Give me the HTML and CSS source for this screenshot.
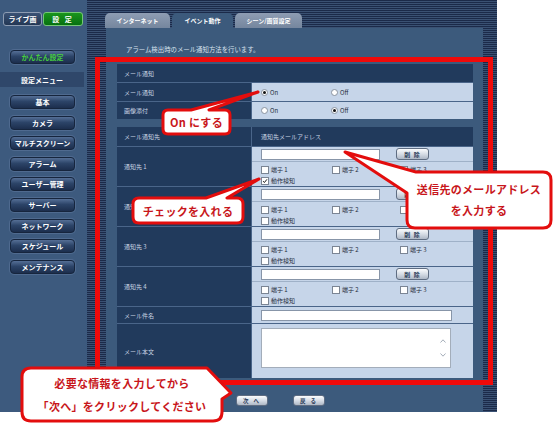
FILE: index.html
```html
<!DOCTYPE html>
<html lang="ja">
<head>
    <meta charset="UTF-8">
    <meta name="viewport" content="width=device-width, initial-scale=1.0">
    <title>イベント動作 - メール通知</title>
    <link rel="stylesheet" href="styles.css">
</head>

<body>
    <div class="screen">
        <aside class="side">
            <div class="mode">
                <span class="mode-btn live">ライブ画</span>
                <span class="mode-btn setup">設 定</span>
            </div>
            <div class="easy">かんたん設定</div>
            <div class="menu-title">設定メニュー</div>
            <nav class="menu">
                <a href="#">基本</a>
                <a href="#">カメラ</a>
                <a href="#">マルチスクリーン</a>
                <a href="#">アラーム</a>
                <a href="#">ユーザー管理</a>
                <a href="#">サーバー</a>
                <a href="#">ネットワーク</a>
                <a href="#">スケジュール</a>
                <a href="#">メンテナンス</a>
            </nav>
        </aside>

        <div class="work">
            <div class="tabs">
                <span class="tab tab-net">インターネット</span>
                <span class="tab tab-event active">イベント動作</span>
                <span class="tab tab-scene">シーン/画質設定</span>
            </div>
            <main class="panel">
                <p class="lead">アラーム検出時のメール通知方法を行います。</p>

                <div class="grid">
                    <div class="head">メール通知</div>
                    <div class="lbl">メール通知</div>
                    <div class="val opts">
                        <span class="opt"><i class="radio on"></i>On</span>
                        <span class="opt"><i class="radio"></i>Off</span>
                    </div>
                    <div class="lbl">画像添付</div>
                    <div class="val opts">
                        <span class="opt"><i class="radio"></i>On</span>
                        <span class="opt"><i class="radio on"></i>Off</span>
                    </div>
                </div>

                <div class="grid grid-dest">
                    <div class="lbl hd">メール通知先</div>
                    <div class="lbl hd addr-hd">通知先メールアドレス</div>

                    <div class="lbl">通知先 1</div>
                    <div class="val dest">
                        <div class="addr"><span class="field"></span><span class="btn del">削 除</span></div>
                        <div class="checks">
                            <span class="opt"><i class="box"></i>端子 1</span>
                            <span class="opt"><i class="box"></i>端子 2</span>
                            <span class="opt"><i class="box"></i>端子 3</span>
                            <span class="opt"><i class="box checked"><svg viewBox="0 0 8 8"><path d="M1.5 4.2 3.2 6 6.6 1.8" /></svg></i>動作検知</span>
                        </div>
                    </div>

                    <div class="lbl">通知先 2</div>
                    <div class="val dest">
                        <div class="addr"><span class="field"></span><span class="btn del">削 除</span></div>
                        <div class="checks">
                            <span class="opt"><i class="box"></i>端子 1</span>
                            <span class="opt"><i class="box"></i>端子 2</span>
                            <span class="opt"><i class="box"></i>端子 3</span>
                            <span class="opt"><i class="box"></i>動作検知</span>
                        </div>
                    </div>

                    <div class="lbl">通知先 3</div>
                    <div class="val dest">
                        <div class="addr"><span class="field"></span><span class="btn del">削 除</span></div>
                        <div class="checks">
                            <span class="opt"><i class="box"></i>端子 1</span>
                            <span class="opt"><i class="box"></i>端子 2</span>
                            <span class="opt"><i class="box"></i>端子 3</span>
                            <span class="opt"><i class="box"></i>動作検知</span>
                        </div>
                    </div>

                    <div class="lbl">通知先 4</div>
                    <div class="val dest">
                        <div class="addr"><span class="field"></span><span class="btn del">削 除</span></div>
                        <div class="checks">
                            <span class="opt"><i class="box"></i>端子 1</span>
                            <span class="opt"><i class="box"></i>端子 2</span>
                            <span class="opt"><i class="box"></i>端子 3</span>
                            <span class="opt"><i class="box"></i>動作検知</span>
                        </div>
                    </div>

                    <div class="lbl">メール件名</div>
                    <div class="val subj"><span class="field wide"></span></div>

                    <div class="lbl">メール本文</div>
                    <div class="val body-cell">
                        <div class="area">
                            <span class="scroll">
                                <svg viewBox="0 0 6 4"><path d="M0.5 3.5 3 0.8 5.5 3.5" /></svg>
                                <svg viewBox="0 0 6 4"><path d="M0.5 0.5 3 3.2 5.5 0.5" /></svg>
                            </span>
                        </div>
                    </div>
                </div>

                <div class="actions">
                    <span class="btn nav-btn">次 へ</span>
                    <span class="btn nav-btn">戻 る</span>
                </div>
            </main>
        </div>
    </div>

    <!-- 注釈（赤枠と吹き出し） -->
    <svg class="marks" width="555" height="427" viewBox="0 0 555 427">
        <rect x="97.5" y="59.5" width="393" height="323" fill="none" stroke="#f00a0a" stroke-width="5" />
        <path class="bubble" d="M168 110 H191 L258 92 L209 110 H225 Q230 110 230 115 V129 Q230 134 225 134 H168 Q163 134 163 129 V115 Q163 110 168 110 Z" />
        <path class="bubble" d="M139 198 H206 L259 179 L227 198 H237 Q243 198 243 204 V217 Q243 223 237 223 H139 Q133 223 133 217 V204 Q133 198 139 198 Z" />
        <path class="bubble" d="M416 172 H543 Q551 172 551 180 V220 Q551 228 543 228 H415 Q407 228 407 220 V193 L345 152 L416 172 Z" />
        <path class="bubble" d="M31 368 H207 L231 393 L222 399 V412 Q222 421 213 421 H31 Q22 421 22 412 V377 Q22 368 31 368 Z" />
    </svg>
    <div class="note note-on">On にする</div>
    <div class="note note-check">チェックを入れる</div>
    <div class="note note-addr">送信先のメールアドレス<br>を入力する</div>
    <div class="note note-next">必要な情報を入力してから<br>「次へ」をクリックしてください</div>
</body>
</html>
```

FILE: styles.css
```css
body {
    margin: 0;
    padding: 0;
    background-color: #fff;
    font-family: "Noto Sans CJK JP", "Noto Sans", sans-serif;
    width: 555px;
    height: 427px;
    position: relative;
    overflow: hidden;
}

.screen {
    display: flex;
    width: 497px;
    height: 412px;
    background-color: #3d5a7e;
}

/* サイドメニュー */
.side {
    width: 87px;
    padding-top: 12px;
    display: flex;
    flex-direction: column;
}

.mode {
    display: flex;
    gap: 1px;
    padding-left: 3px;
    height: 14px;
}

.mode-btn {
    display: flex;
    align-items: center;
    justify-content: center;
    box-sizing: border-box;
    border-radius: 3px;
    font-size: 7px;
    font-weight: bold;
    color: #fff;
}

.mode-btn.live {
    width: 39px;
    background: linear-gradient(#3a5275, #233754);
    border: 1px solid #8d9cb2;
}

.mode-btn.setup {
    width: 40px;
    background: linear-gradient(#1a961c, #067010);
    border: 1px solid #74c874;
    letter-spacing: 2px;
}

.easy,
.menu a {
    display: flex;
    align-items: center;
    justify-content: center;
    box-sizing: border-box;
    width: 65px;
    height: 14px;
    margin-left: 10px;
    border: 1px solid #16253d;
    border-radius: 4px;
    background: linear-gradient(#556f96, #2c4468 45%, #1c2e4d);
    box-shadow: 0 0 0 1px #4f6a8f;
    font-size: 7px;
    font-weight: bold;
    color: #fff;
    text-decoration: none;
}

.easy {
    margin-top: 24px;
    color: #46d03c;
}

.menu-title {
    margin-top: 8px;
    width: 84px;
    height: 15px;
    background-color: #2f476a;
    color: #fff;
    font-size: 7px;
    font-weight: bold;
    display: flex;
    align-items: center;
    justify-content: center;
}

.menu {
    margin-top: 8px;
    display: flex;
    flex-direction: column;
    gap: 6.6px;
}

/* 右側 */
.work {
    width: 410px;
    box-sizing: border-box;
    padding: 0 14px 0 19px;
    display: flex;
    flex-direction: column;
    background: repeating-linear-gradient(#1b2a49 0, #1b2a49 1px, #3a5173 1px, #3a5173 2px);
}

.tabs {
    height: 28px;
    display: flex;
    align-items: flex-end;
    gap: 2px;
    margin-left: -1px;
}

.tab {
    height: 15px;
    display: flex;
    align-items: center;
    justify-content: center;
    border-radius: 5px 5px 0 0;
    background: linear-gradient(#8e9db3, #75869e);
    color: #fff;
    font-size: 6px;
    font-weight: bold;
}

.tab-net { width: 65px; }
.tab-event { width: 61px; }
.tab-scene { width: 67px; }

.tab.active {
    background: #3c5a7c;
}

.panel {
    flex: 1;
    background-color: #3c5a7c;
    padding: 16px 10px 0 11px;
}

.lead {
    margin: 0 0 8px 0;
    height: 12px;
    line-height: 12px;
    padding-left: 9px;
    font-size: 6.4px;
    color: #d8e2ee;
}

.grid {
    display: grid;
    grid-template-columns: 134px 1fr;
    gap: 1px;
    background-color: #4a6589;
    grid-template-rows: 18px 18px 17px;
}

.grid-dest {
    margin-top: 8px;
    grid-template-rows: 19px 39px 39px 39px 39px 16px 54px;
}

.head {
    grid-column: 1 / 3;
}

.head,
.lbl {
    background-color: #213a5c;
    color: #c9d5e4;
    font-size: 6px;
    display: flex;
    align-items: center;
    padding-left: 7px;
}

.lbl.addr-hd {
    padding-left: 9px;
}

.val {
    background-color: #c6d5e9;
    padding-left: 9px;
    font-size: 6px;
    color: #1e2a3a;
}

.opts {
    display: flex;
    align-items: center;
}

.opt {
    display: flex;
    align-items: center;
    gap: 2px;
    width: 70px;
    white-space: nowrap;
}

.radio {
    width: 5px;
    height: 5px;
    border-radius: 50%;
    border: 1px solid #8a93a0;
    background: #fff;
    box-sizing: content-box;
    position: relative;
}

.radio.on::after {
    content: "";
    position: absolute;
    left: 1px;
    top: 1px;
    width: 3px;
    height: 3px;
    border-radius: 50%;
    background: #111;
}

.val.dest {
    padding: 0;
    display: flex;
    flex-direction: column;
    gap: 1px;
    background-color: #9fb1c8;
}

.addr {
    height: 14px;
    background-color: #c6d5e9;
    display: flex;
    align-items: center;
    padding-left: 9px;
}

.field {
    display: block;
    width: 117px;
    height: 9px;
    background: #fff;
    border: 1px solid #8795a8;
}

.field.wide {
    width: 189px;
}

.btn {
    display: flex;
    align-items: center;
    justify-content: center;
    box-sizing: border-box;
    border: 1px solid #5f6d82;
    border-radius: 3px;
    background: linear-gradient(#fbfcfd, #d7dde6 50%, #aeb8c6);
    color: #2a3b58;
    font-size: 6px;
    font-weight: bold;
}

.del {
    width: 33px;
    height: 12px;
    margin-left: 16px;
    letter-spacing: 1px;
}

.checks {
    flex: 1;
    background-color: #c6d5e9;
    display: grid;
    grid-template-columns: 71px 68px 1fr;
    grid-auto-rows: 11px;
    align-content: start;
    padding: 2px 0 0 9px;
    font-size: 6px;
    color: #1e2a3a;
}

.box {
    width: 6px;
    height: 6px;
    border: 1px solid #7b8594;
    background: #fff;
    display: block;
}

.box svg {
    display: block;
    width: 6px;
    height: 6px;
    fill: none;
    stroke: #111;
    stroke-width: 1.3;
}

.val.subj {
    display: flex;
    align-items: center;
}

.val.body-cell {
    padding-top: 4px;
}

.area {
    width: 190px;
    height: 40px;
    box-sizing: border-box;
    background: #fff;
    border: 1px solid #a3adba;
    display: flex;
    justify-content: flex-end;
}

.scroll {
    width: 8px;
    display: flex;
    flex-direction: column;
    justify-content: center;
    gap: 10px;
    padding-right: 2px;
}

.scroll svg {
    width: 6px;
    height: 4px;
    fill: none;
    stroke: #9aa4b0;
    stroke-width: 0.9;
}

.actions {
    display: flex;
    gap: 25px;
    margin-top: 17px;
    padding-left: 119px;
}

.nav-btn {
    width: 32px;
    height: 11px;
    letter-spacing: 2px;
    font-size: 5.5px;
}

/* 注釈 */
.marks {
    position: absolute;
    left: 0;
    top: 0;
    pointer-events: none;
}

.bubble {
    fill: #fff;
    stroke: #e30d0d;
    stroke-width: 3;
    stroke-linejoin: round;
}

.note {
    position: absolute;
    display: flex;
    align-items: center;
    justify-content: center;
    text-align: center;
    color: #c8161b;
    font-size: 11px;
    font-weight: bold;
    letter-spacing: 0.3px;
}

.note-on {
    left: 163px;
    top: 110px;
    width: 67px;
    height: 24px;
}

.note-check {
    left: 133px;
    top: 198px;
    width: 110px;
    height: 25px;
}

.note-addr {
    left: 407px;
    top: 172px;
    width: 144px;
    height: 56px;
    line-height: 21px;
}

.note-next {
    left: 22px;
    top: 368px;
    width: 200px;
    height: 53px;
    line-height: 23px;
}
```
